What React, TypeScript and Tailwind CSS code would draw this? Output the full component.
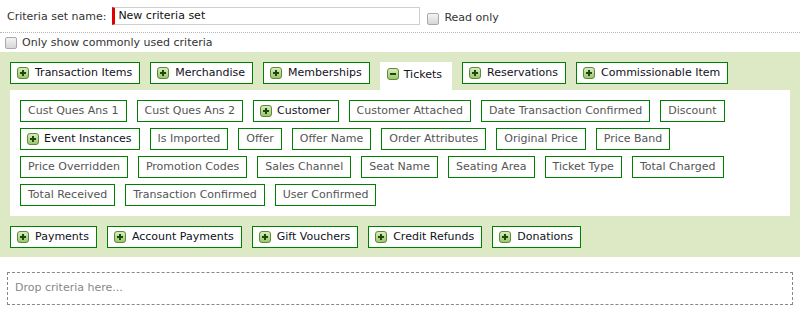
import React from "react";

const font = { fontFamily: '"DejaVu Sans", Verdana, sans-serif' };

const PlusMinus = ({ minus = false }: { minus?: boolean }) => (
  <svg width="12" height="12" viewBox="0 0 12 12" className="shrink-0">
    <defs>
      <linearGradient id={minus ? "gm" : "gp"} x1="0" y1="0" x2="0" y2="1">
        <stop offset="0" stopColor="#dcedc4" />
        <stop offset="1" stopColor="#98c469" />
      </linearGradient>
    </defs>
    <rect x="0.5" y="0.5" width="11" height="11" rx="2.5" fill={`url(#${minus ? "gm" : "gp"})`} stroke="#5f8b34" />
    <rect x="3" y="5" width="6" height="2" fill="#1d4a0c" />
    {!minus && <rect x="5" y="3" width="2" height="6" fill="#1d4a0c" />}
  </svg>
);

const Checkbox = () => (
  <span className="inline-block h-[12px] w-[12px] shrink-0 rounded-[2px] border border-[#a9a9a9] bg-gradient-to-b from-[#f4f4f4] to-[#d6d6d6]" />
);

const Category = ({ label }: { label: string }) => (
  <div className="flex h-[22px] items-center gap-[6px] border border-[#008000] bg-white pl-[6px] pr-[7px] text-[11px] text-[#111122]">
    <PlusMinus />
    <span>{label}</span>
  </div>
);

const Item = ({ label, expandable = false }: { label: string; expandable?: boolean }) =>
  expandable ? (
    <div className="flex h-[22px] items-center gap-[5px] border border-[#008000] bg-white pl-[6px] pr-[7px] text-[11px] text-[#111122]">
      <PlusMinus />
      <span>{label}</span>
    </div>
  ) : (
    <div className="flex h-[22px] items-center border border-[#008000] bg-white px-[7px] text-[11px] text-[#555]">
      {label}
    </div>
  );

const rows: { label: string; expandable?: boolean }[][] = [
  [
    { label: "Cust Ques Ans 1" },
    { label: "Cust Ques Ans 2" },
    { label: "Customer", expandable: true },
    { label: "Customer Attached" },
    { label: "Date Transaction Confirmed" },
    { label: "Discount" },
  ],
  [
    { label: "Event Instances", expandable: true },
    { label: "Is Imported" },
    { label: "Offer" },
    { label: "Offer Name" },
    { label: "Order Attributes" },
    { label: "Original Price" },
    { label: "Price Band" },
  ],
  [
    { label: "Price Overridden" },
    { label: "Promotion Codes" },
    { label: "Sales Channel" },
    { label: "Seat Name" },
    { label: "Seating Area" },
    { label: "Ticket Type" },
    { label: "Total Charged" },
  ],
  [{ label: "Total Received" }, { label: "Transaction Confirmed" }, { label: "User Confirmed" }],
];

export default function App() {
  return (
    <div className="h-[310px] w-[800px] overflow-hidden bg-white" style={font}>
      {/* Name row */}
      <div className="flex h-[33px] items-start border-b border-dotted border-[#b5b5b5] pl-[7px] pt-[7px]">
        <span className="mt-[2px] text-[11px] text-[#333]">Criteria set name:</span>
        <div className="ml-[6px] flex h-[18px] w-[308px] items-center border border-l-[3px] border-[#cfcfcf] border-l-[#e00000] pl-[3px] text-[11px] text-[#111]">
          New criteria set
        </div>
        <div className="ml-[7px] flex items-start gap-[5px]">
          <span className="mt-[1px]"><Checkbox /></span>
          <span className="mt-[3px] text-[11px] text-[#333]">Read only</span>
        </div>
      </div>

      {/* Common criteria toggle */}
      <div className="flex h-[19px] items-center gap-[5px] pl-[5px] pt-[1px]">
        <Checkbox />
        <span className="text-[11px] text-[#333]">Only show commonly used criteria</span>
      </div>

      {/* Criteria panel */}
      <div className="bg-[#dde9c5] px-[10px] pb-[9px] pt-[10px]">
        <div className="flex items-start gap-[10px]">
          <Category label="Transaction Items" />
          <Category label="Merchandise" />
          <Category label="Memberships" />
          <div className="flex h-[28px] items-start gap-[5px] bg-white pl-[7px] pr-[10px] pt-[5px] text-[11px] text-[#111122]">
            <span className="mt-[1px]"><PlusMinus minus /></span>
            <span>Tickets</span>
          </div>
          <Category label="Reservations" />
          <Category label="Commissionable Item" />
        </div>

        <div className="flex flex-col gap-[6px] bg-white p-[10px]">
          {rows.map((row, i) => (
            <div key={i} className="flex gap-[10px]">
              {row.map((it) => (
                <Item key={it.label} label={it.label} expandable={it.expandable} />
              ))}
            </div>
          ))}
        </div>

        <div className="mt-[10px] flex gap-[10px]">
          <Category label="Payments" />
          <Category label="Account Payments" />
          <Category label="Gift Vouchers" />
          <Category label="Credit Refunds" />
          <Category label="Donations" />
        </div>
      </div>

      {/* Drop zone */}
      <div className="mx-[7px] mt-[15px] flex h-[33px] items-center border border-dashed border-[#888] pl-[7px] text-[11px] text-[#888]">
        Drop criteria here...
      </div>
    </div>
  );
}
